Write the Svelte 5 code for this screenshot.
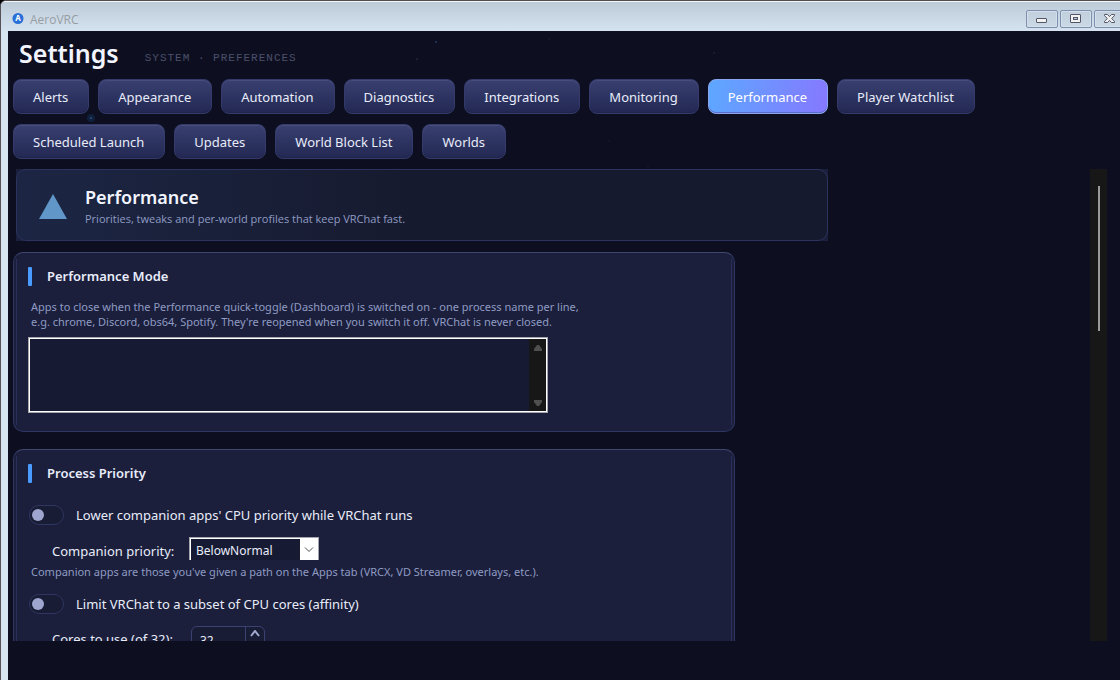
<script>
    let tabs = [
        "Alerts", "Appearance", "Automation", "Diagnostics", "Integrations", "Monitoring",
        "Performance", "Player Watchlist", "Scheduled Launch", "Updates", "World Block List", "Worlds"
    ];
    let active = $state("Performance");
    let apps = $state("");
    let lowerPriority = $state(false);
    let limitCores = $state(false);
    let priority = $state("BelowNormal");
    let cores = $state(32);

    // x, y, radius, colour
    const stars = [
        [83, 87, 4, "#10203a"], [83, 87, 1, "#24548c"], [428, 11, 1, "#1e3a66"], [409, 28, 1, "#23263a"],
        [541, 8, 1, "#171a2c"], [706, 22, 1, "#1e2136"], [601, 110, 1, "#15182b"], [640, 136, 1, "#15182b"]
    ];
</script>

<div class="window">
    <header class="titlebar">
        <svg class="logo" width="12" height="12" viewBox="0 0 12 12">
            <circle cx="6" cy="5.5" r="5.5" fill="#2870d8" />
            <text x="6" y="8" text-anchor="middle">A</text>
        </svg>
        <span class="app-name">AeroVRC</span>
        <div class="controls">
            <button aria-label="Minimize">
                <svg width="12" height="10" viewBox="0 0 12 10">
                    <rect x="0.5" y="4.5" width="10" height="4" rx="0.5" fill="#f2f2f2" stroke="#535666" />
                </svg>
            </button>
            <button aria-label="Maximize">
                <svg width="12" height="10" viewBox="0 0 12 10">
                    <rect x="0.5" y="0.5" width="10" height="8" rx="0.5" fill="#f2f2f2" stroke="#535666" />
                    <rect x="3.5" y="3.5" width="4" height="2" fill="#b9c9da" stroke="#535666" />
                </svg>
            </button>
            <button aria-label="Close">
                <svg width="12" height="10" viewBox="0 0 12 10">
                    <path d="M.5.5h3l2 2.1 2-2.1h3v1.200L7.600 4.500l2.900 2.800v1.200h-3L5.500 6.400 3.500 8.500h-3V7.300l2.900-2.800L.5 1.700z" fill="#f2f2f2" stroke="#535666" />
                </svg>
            </button>
        </div>
    </header>

    <main class="client">
        <svg class="stars" aria-hidden="true">
            {#each stars as [x, y, r, fill]}
                <circle cx={x} cy={y} {r} {fill} />
            {/each}
        </svg>

        <div class="heading">
            <h1>Settings</h1>
            <span class="crumb">SYSTEM · PREFERENCES</span>
        </div>

        <nav class="tabs">
            {#each tabs as tab}
                <button class:active={tab === active} onclick={() => (active = tab)}>{tab}</button>
            {/each}
        </nav>

        <div class="view">
            <div class="content">
                <section class="hero">
                    <div class="hero-inner">
                        <svg width="28" height="26" viewBox="0 0 28 26">
                            <path d="M14 0 28 25H0z" fill="#6096c8" />
                        </svg>
                        <div>
                            <h2>Performance</h2>
                            <p>Priorities, tweaks and per-world profiles that keep VRChat fast.</p>
                        </div>
                    </div>
                </section>

                <section class="card">
                    <h3>Performance Mode</h3>
                    <label class="hint" for="apps">
                        Apps to close when the Performance quick-toggle (Dashboard) is switched on - one process name per line,<br />
                        e.g. chrome, Discord, obs64, Spotify. They're reopened when you switch it off. VRChat is never closed.
                    </label>
                    <div class="app-list">
                        <textarea id="apps" bind:value={apps}></textarea>
                        <div class="list-scroll">
                            <svg width="10" height="7" viewBox="0 0 10 7"><path d="M4 0h2l3 4v2H1V4z" fill="#4f4f4f" /></svg>
                            <svg width="10" height="7" viewBox="0 0 10 7"><path d="M1 0h8v2L6 6H4L1 2z" fill="#4f4f4f" /></svg>
                        </div>
                    </div>
                </section>

                <section class="card">
                    <h3>Process Priority</h3>
                    <label class="switch">
                        <input type="checkbox" bind:checked={lowerPriority} />
                        Lower companion apps' CPU priority while VRChat runs
                    </label>
                    <div class="field">
                        <label for="priority">Companion priority:</label>
                        <div class="select">
                            <select id="priority" bind:value={priority}>
                                <option>Idle</option>
                                <option>BelowNormal</option>
                                <option>Normal</option>
                            </select>
                            <span class="drop">
                                <svg width="10" height="6" viewBox="0 0 10 6"><path d="M1 .5l4 4 4-4" fill="none" stroke="#505050" /></svg>
                            </span>
                        </div>
                    </div>
                    <p class="hint">Companion apps are those you've given a path on the Apps tab (VRCX, VD Streamer, overlays, etc.).</p>
                    <label class="switch">
                        <input type="checkbox" bind:checked={limitCores} />
                        Limit VRChat to a subset of CPU cores (affinity)
                    </label>
                    <div class="field cores">
                        <label for="cores">Cores to use (of 32):</label>
                        <div class="spinner">
                            <input id="cores" type="number" min="1" max="32" bind:value={cores} />
                            <div class="steps">
                                <button aria-label="More cores" onclick={() => cores++}>
                                    <svg width="10" height="7" viewBox="0 0 10 7"><path d="M1 6l4-5 4 5" fill="none" stroke="#a3abd0" stroke-width="2" /></svg>
                                </button>
                                <button aria-label="Fewer cores" onclick={() => cores--}>
                                    <svg width="10" height="7" viewBox="0 0 10 7"><path d="M1 1l4 5 4-5" fill="none" stroke="#a3abd0" stroke-width="2" /></svg>
                                </button>
                            </div>
                        </div>
                    </div>
                </section>
            </div>
            <div class="scrollbar"><div class="thumb"></div></div>
        </div>
    </main>
</div>

<style>
    :global(body) {
        background: #000;
        font-family: "Noto Sans", "Open Sans", sans-serif;
        font-size: 13px;
    }

    * {
        box-sizing: border-box;
    }

    h1, h2, h3, p {
        margin: 0;
        font-weight: 600;
    }

    button, input, select, textarea {
        font: inherit;
        color: inherit;
        margin: 0;
    }

    .window {
        height: 100vh;
        overflow: hidden;
        display: flex;
        flex-direction: column;
        background: #d7e4f2;
        border-top: 1px solid #514c50;
        border-left: 1px solid #55525a;
        border-top-left-radius: 6px;
        color: #e8ecfa;
    }

    .titlebar {
        flex: none;
        height: 30px;
        display: flex;
        align-items: center;
        padding: 5px 0 0 11px;
        border-top: 1px solid #f4f7fa;
        background: linear-gradient(#bdcad7, #d5e3f0);
        overflow: hidden;
    }

    .logo text {
        font-size: 8px;
        font-weight: 700;
        fill: #fff;
    }

    .app-name {
        margin-left: 6px;
        font-family: "Open Sans", sans-serif;
        font-size: 12px;
        color: #979da3;
    }

    .controls {
        display: flex;
        gap: 2px;
        margin: 0 -6px 0 auto;
    }

    .controls button {
        width: 32px;
        height: 18px;
        padding: 0;
        display: flex;
        align-items: center;
        justify-content: center;
        border: 1px solid #7f8fae;
        border-radius: 2px;
        background: linear-gradient(#c1cedb, #cbd9e6);
        box-shadow: inset 0 0 0 1px #d3dfeb;
    }

    .client {
        position: relative;
        flex: 1;
        min-height: 0;
        display: flex;
        flex-direction: column;
        margin-left: 7px;
        padding: 0 13px 39px 5px;
        background: #0d0f21;
    }

    .stars {
        position: absolute;
        inset: 0;
        width: 100%;
        height: 100%;
        pointer-events: none;
    }

    .heading {
        display: flex;
        align-items: flex-start;
        gap: 26px;
        height: 48px;
        padding-left: 6px;
    }

    h1 {
        font-size: 25px;
        line-height: 44px;
        color: #f2f5ff;
    }

    .crumb {
        padding-top: 21px;
        font-family: "Liberation Mono", monospace;
        font-size: 11px;
        letter-spacing: 1px;
        color: #4b506a;
    }

    .tabs {
        position: relative;
        display: flex;
        flex-wrap: wrap;
        gap: 10px 9px;
        margin-right: -13px;
    }

    .tabs button {
        height: 35px;
        padding: 0 20px 0 19px;
        border: 1px solid #343b6c;
        border-radius: 8px;
        background: linear-gradient(#394070, #232853);
        box-shadow: inset 0 1px #474e7c, inset 0 -1px #1f2448;
    }

    .tabs .active {
        border-color: #8ba6ee;
        background: linear-gradient(100deg, #5da8ff, #8678ff);
        box-shadow: inset 0 -1px #5c6cc8;
        color: #fff;
    }

    .view {
        position: relative;
        flex: 1;
        min-height: 0;
        display: flex;
        margin-top: 10px;
    }

    .content {
        flex: 1;
        overflow: hidden;
    }

    .scrollbar {
        width: 17px;
        padding: 17px 0;
        background: #171717;
    }

    .thumb {
        width: 2px;
        height: 33%;
        margin: 0 auto;
        background: #9a9a9a;
    }

    .hero {
        max-width: 812px;
        margin-left: 3px;
        background: #1a1f3c;
    }

    .hero-inner {
        display: flex;
        align-items: center;
        gap: 18px;
        height: 72px;
        padding: 4px 22px 0;
        border: 1px solid #2b335e;
        border-radius: 10px;
        background: linear-gradient(90deg, #1c2644, #161a2e 50%);
    }

    h2 {
        margin-bottom: 2px;
        font-size: 18px;
        line-height: 22px;
        color: #f2f5ff;
    }

    .hero p {
        font-family: "Open Sans", sans-serif;
        font-size: 11px;
        font-weight: 400;
        line-height: 18px;
        color: #8f9bc4;
    }

    .card {
        max-width: 722px;
        margin-top: 11px;
        padding: 14px 14px 18px;
        border: 1px solid #2d3561;
        border-top-color: #3f466f;
        border-radius: 10px;
        background:
            linear-gradient(#2a305a, #2a305a) 2px 6px / 1px calc(100% - 12px) no-repeat,
            linear-gradient(#2a305a, #2a305a) calc(100% - 2px) 6px / 1px calc(100% - 12px) no-repeat,
            #1b1f3b;
    }

    .card + .card {
        margin-top: 17px;
    }

    h3 {
        display: flex;
        align-items: center;
        gap: 15px;
        font-size: 13px;
        line-height: 19px;
        margin-bottom: 13px;
    }

    h3::before {
        content: "";
        width: 4px;
        height: 19px;
        border-radius: 1px;
        background: #4a9bff;
    }

    .hint {
        display: block;
        padding-left: 3px;
        font-size: 11px;
        font-weight: 400;
        line-height: 15px;
        color: #8f9bc4;
    }

    .app-list {
        display: flex;
        max-width: 520px;
        height: 76px;
        margin-top: 8px;
        border: 1px solid #a5a6ad;
        outline: 1px solid #fff;
        outline-offset: -2px;
        padding: 1px;
        background: #161a33;
    }

    textarea {
        flex: 1;
        padding: 4px;
        border: 0;
        outline: 0;
        resize: none;
        background: none;
    }

    .list-scroll {
        width: 17px;
        padding: 6px 0 4px;
        display: flex;
        flex-direction: column;
        align-items: center;
        justify-content: space-between;
        background: #171717;
    }

    .switch {
        display: flex;
        align-items: center;
        gap: 12px;
        height: 20px;
        padding-left: 1px;
    }

    h3 + .switch {
        margin-top: 22px;
    }

    .hint + .switch {
        margin-top: 15px;
    }

    .switch input {
        appearance: none;
        width: 35px;
        height: 20px;
        padding: 3px 2px;
        border: 1px solid #2f3661;
        border-radius: 10px;
        background: #181c34;
    }

    .switch input::before {
        content: "";
        display: block;
        width: 12px;
        height: 12px;
        border-radius: 50%;
        background: #9ea6cf;
    }

    .switch input:checked::before {
        margin-left: auto;
        background: #4a9bff;
    }

    .field {
        display: flex;
        align-items: center;
        gap: 14px;
        padding-left: 24px;
        margin: 12px 0 4px;
    }

    .field > label {
        width: 123px;
        padding-top: 4px;
    }

    .select {
        display: flex;
        position: relative;
        width: 130px;
        height: 23px;
        border: 1px solid #a5a6ad;
        border-bottom: 0;
    }

    .select select {
        appearance: none;
        flex: 1;
        padding: 2px 20px 0 5px;
        border: 1px solid #fff;
        border-bottom: 0;
        border-radius: 0;
        background: #161a33;
        outline: 0;
        font-size: 12px;
    }

    .drop {
        position: absolute;
        inset: 0 0 0 auto;
        width: 18px;
        padding-top: 2px;
        display: flex;
        align-items: center;
        justify-content: center;
        background: #fff;
        pointer-events: none;
    }

    .cores {
        align-items: flex-start;
        gap: 16px;
    }

    .spinner {
        display: flex;
        width: 74px;
        height: 28px;
        border: 1px solid #3a4271;
        border-radius: 6px;
        background: #181c34;
        overflow: hidden;
    }

    .spinner input {
        appearance: textfield;
        width: 53px;
        padding: 0 8px;
        border: 0;
        outline: 0;
        background: none;
        font-size: 12px;
    }

    .steps {
        flex: 1;
        display: flex;
        flex-direction: column;
        border-left: 1px solid #3a4271;
    }

    .steps button {
        flex: 1;
        display: flex;
        align-items: center;
        justify-content: center;
        padding: 0;
        border: 0;
        background: none;
    }
</style>
